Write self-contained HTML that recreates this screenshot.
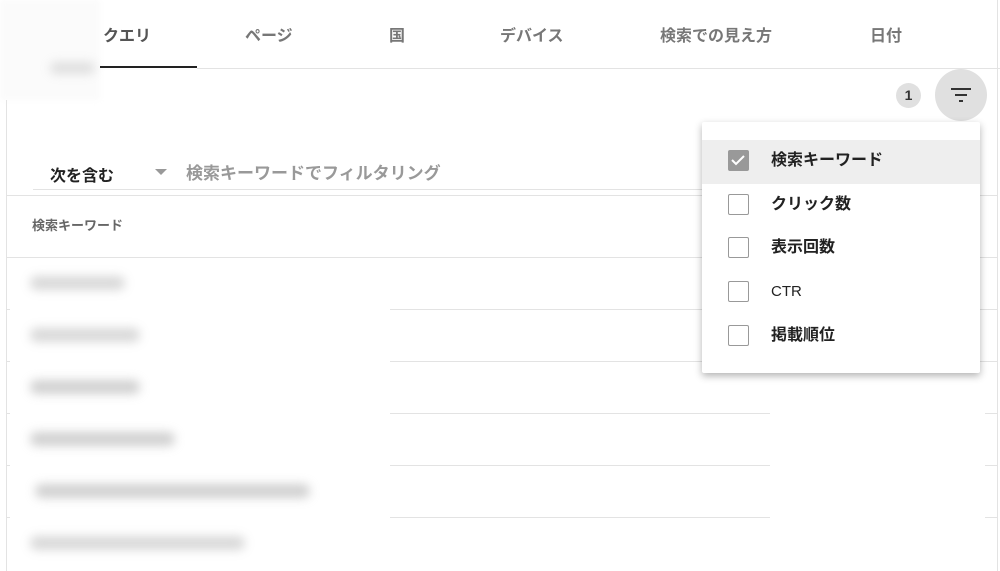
<!DOCTYPE html>
<html><head><meta charset="utf-8"><style>
*{margin:0;padding:0;box-sizing:border-box}
body{width:1000px;height:571px;overflow:hidden;background:#fff;position:relative;font-family:"Liberation Sans","Noto Sans CJK JP",sans-serif;font-weight:bold}
.a{position:absolute}
.tab{position:absolute;top:22px;font-size:16px;color:#777}
.hl{position:absolute;height:1px;background:#e3e3e3}
.blur{position:absolute;background:#aaa;filter:blur(5px);border-radius:8px}
.it{position:absolute;left:0;width:278px;height:44px}
.cb{position:absolute;left:26px;top:10px;width:21px;height:21px;border:1.5px solid #999;border-radius:2px;background:#fff}
.it span{position:absolute;left:69px;top:9px;font-size:16px;color:#222;line-height:24px}
</style></head><body>
<div class="a" style="left:0;top:0;width:100px;height:100px;background:#fbfbfb;filter:blur(3px)"></div>
<div class="blur" style="left:50px;top:62px;width:45px;height:12px;opacity:.35"></div>
<div class="tab" style="left:103px;color:#555">クエリ</div>
<div class="tab" style="left:245px">ページ</div>
<div class="tab" style="left:389px">国</div>
<div class="tab" style="left:500px">デバイス</div>
<div class="tab" style="left:660px">検索での見え方</div>
<div class="tab" style="left:870px">日付</div>
<div class="a" style="left:100px;top:66px;width:97px;height:2px;background:#222"></div>
<div class="hl" style="left:197px;top:68px;width:803px"></div>
<div class="a" style="left:6px;top:100px;width:1px;height:471px;background:#e3e3e3"></div>
<div class="a" style="left:997px;top:0;width:1px;height:571px;background:#e3e3e3"></div>
<div class="a" style="left:896px;top:83px;width:25px;height:25px;border-radius:50%;background:#e0e0e0;font-size:14px;color:#333;text-align:center;line-height:25px">1</div>
<div class="a" style="left:935px;top:69px;width:52px;height:52px;border-radius:50%;background:#e0e0e0"></div>
<svg class="a" style="left:949px;top:85px" width="24" height="20"><path d="M2 4h20M6 10h12M10 16h4" stroke="#333" stroke-width="2"/></svg>
<div class="a" style="left:50px;top:162px;font-size:16px;color:#222">次を含む</div>
<div class="a" style="left:155px;top:169px;width:0;height:0;border-left:6px solid transparent;border-right:6px solid transparent;border-top:6px solid #999"></div>
<div class="a" style="left:186px;top:159px;font-size:17px;color:#999">検索キーワードでフィルタリング</div>
<div class="hl" style="left:33px;top:189px;width:670px"></div>
<div class="hl" style="left:7px;top:195px;width:990px"></div>
<div class="a" style="left:32px;top:215px;font-size:13px;color:#666">検索キーワード</div>
<div class="hl" style="left:7px;top:257px;width:990px"></div>
<div class="hl" style="left:7px;top:309px;width:990px"></div>
<div class="hl" style="left:7px;top:361px;width:990px"></div>
<div class="hl" style="left:7px;top:413px;width:990px"></div>
<div class="hl" style="left:7px;top:465px;width:990px"></div>
<div class="hl" style="left:7px;top:517px;width:990px"></div>
<div class="a" style="left:10px;top:258px;width:380px;height:313px;background:#fff"></div>
<div class="a" style="left:770px;top:374px;width:215px;height:197px;background:#fff"></div>
<div class="blur" style="left:30px;top:276px;width:95px;height:14px;opacity:.45"></div>
<div class="blur" style="left:30px;top:328px;width:110px;height:14px;opacity:.45"></div>
<div class="blur" style="left:30px;top:380px;width:110px;height:14px;opacity:.55"></div>
<div class="blur" style="left:30px;top:432px;width:145px;height:14px;opacity:.55"></div>
<div class="blur" style="left:35px;top:484px;width:275px;height:14px;opacity:.55"></div>
<div class="blur" style="left:30px;top:536px;width:215px;height:14px;opacity:.45"></div>
<div class="a" style="left:702px;top:122px;width:278px;height:251px;background:#fff;box-shadow:0 3px 8px rgba(0,0,0,.3);border-radius:2px">
<div class="it" style="top:18px;background:#eee"><div class="cb" style="background:#999;border-color:#999"><svg width="18" height="18" style="position:absolute;left:0;top:0"><path d="M3 9l4 4 8-8" stroke="#fff" stroke-width="2" fill="none"/></svg></div><span>検索キーワード</span></div>
<div class="it" style="top:62px"><div class="cb"></div><span>クリック数</span></div>
<div class="it" style="top:105px"><div class="cb"></div><span>表示回数</span></div>
<div class="it" style="top:149px"><div class="cb"></div><span style="font-weight:normal;font-size:15px;top:9px">CTR</span></div>
<div class="it" style="top:193px"><div class="cb"></div><span>掲載順位</span></div>
</div>
</body></html>
